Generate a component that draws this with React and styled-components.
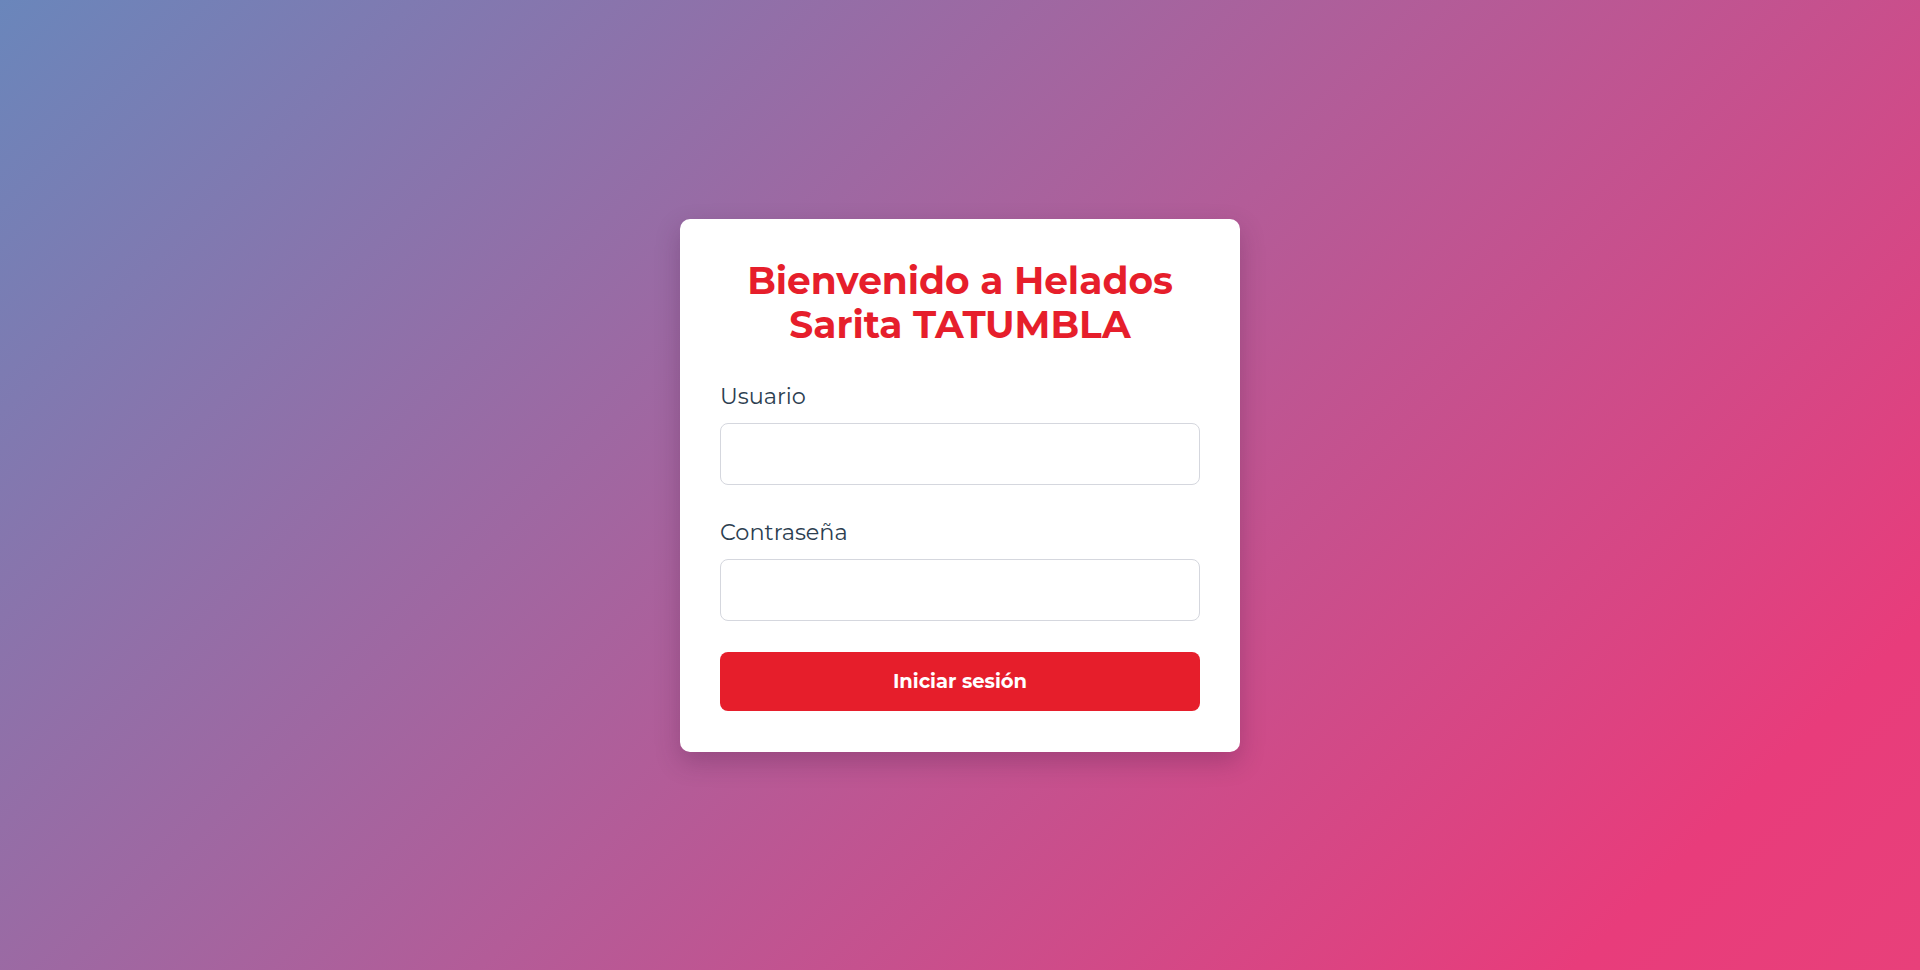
import React, { useState } from "react";
import styled, { createGlobalStyle } from "styled-components";

const GlobalStyle = createGlobalStyle`
  * { box-sizing: border-box; }
  html, body, #root { margin: 0; padding: 0; height: 100%; }
  body {
    font-family: "Montserrat", "Open Sans", "Liberation Sans", sans-serif;
  }
`;

const Page = styled.div`
  min-height: 100vh;
  display: flex;
  align-items: center;
  justify-content: center;
  background: linear-gradient(135deg, #6a86bb 0%, #b35c98 50%, #e83c7b 88%, #e8407a 100%);
`;

const Card = styled.form`
  width: 560px;
  background: #ffffff;
  border-radius: 10px;
  padding: 40px 40px 41px;
  box-shadow: 0 10px 25px rgba(60, 20, 60, 0.25);
  display: flex;
  flex-direction: column;
`;

const Title = styled.h1`
  margin: 0 0 35px;
  text-align: center;
  color: #e61e2b;
  font-size: 37.5px;
  line-height: 44px;
  font-weight: 700;
`;

const Field = styled.div`
  display: flex;
  flex-direction: column;
  gap: 13px;
  margin-bottom: 33px;
`;

const Label = styled.label`
  font-size: 22.4px;
  line-height: 28px;
  color: #2c3e50;
`;

const Input = styled.input`
  height: 62px;
  border: 1px solid #d5d7de;
  border-radius: 8px;
  padding: 0 16px;
  font-size: 18px;
  font-family: inherit;
  outline: none;
`;

const Button = styled.button`
  margin-top: -2px;
  height: 59px;
  border: none;
  border-radius: 8px;
  background: #e61e2b;
  color: #ffffff;
  font-family: inherit;
  font-size: 19.5px;
  font-weight: 700;
  cursor: pointer;
`;

export default function App() {
  const [user, setUser] = useState("");
  const [pass, setPass] = useState("");

  const handleSubmit = (e) => {
    e.preventDefault();
  };

  return (
    <>
      <GlobalStyle />
      <Page>
        <Card onSubmit={handleSubmit}>
          <Title>Bienvenido a Helados Sarita TATUMBLA</Title>
          <Field>
            <Label htmlFor="usuario">Usuario</Label>
            <Input id="usuario" type="text" value={user} onChange={(e) => setUser(e.target.value)} />
          </Field>
          <Field>
            <Label htmlFor="clave">Contraseña</Label>
            <Input id="clave" type="password" value={pass} onChange={(e) => setPass(e.target.value)} />
          </Field>
          <Button type="submit">Iniciar sesión</Button>
        </Card>
      </Page>
    </>
  );
}
